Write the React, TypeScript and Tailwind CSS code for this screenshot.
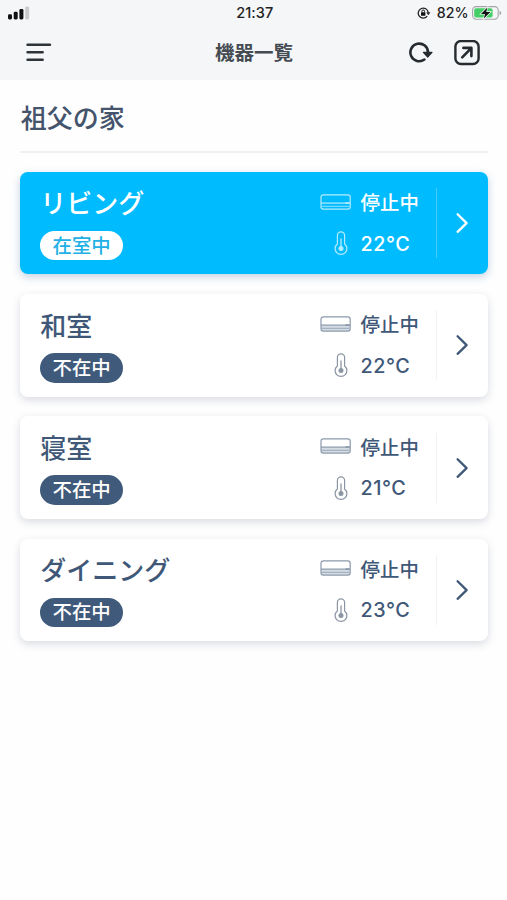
import clsx from 'clsx';

type Room = {
  name: string;
  present: boolean;
  status: string;
  temperature: number;
};

const rooms: Room[] = [
  { name: 'リビング', present: true, status: '停止中', temperature: 22 },
  { name: '和室', present: false, status: '停止中', temperature: 22 },
  { name: '寝室', present: false, status: '停止中', temperature: 21 },
  { name: 'ダイニング', present: false, status: '停止中', temperature: 23 },
];

function SignalIcon() {
  return (
    <svg width="22" height="14" viewBox="0 0 22 14" fill="#111">
      <rect x="0" y="8.2" width="4" height="5.2" rx="1.3" />
      <rect x="5.7" y="5.8" width="4" height="7.6" rx="1.3" />
      <rect x="11.4" y="3" width="4" height="10.4" rx="1.3" />
      <rect x="17.2" y="0.4" width="3.9" height="13" rx="1.3" fill="#c9cbcd" />
    </svg>
  );
}

function RotationLockIcon() {
  return (
    <svg width="14" height="12" viewBox="0 0 14 12" fill="none">
      <path d="M10.2 9.2A5 5 0 1 1 11.2 5.4" stroke="#222" strokeWidth="1.3" />
      <path d="M9.2 5.2h4.2L11.3 8.2z" fill="#222" />
      <rect x="4" y="5.2" width="4.4" height="3.5" rx="0.5" fill="#111" />
      <path d="M4.9 5.4V4.3a1.3 1.3 0 0 1 2.6 0v1.1" stroke="#111" strokeWidth="1" />
    </svg>
  );
}

function BatteryIcon() {
  return (
    <svg width="30" height="14" viewBox="0 0 30 14" fill="none">
      <rect x="0.6" y="0.6" width="25.6" height="12.6" rx="3.6" stroke="#a2a5a7" strokeWidth="1.1" />
      <rect x="2.2" y="2.2" width="18.4" height="9.4" rx="2" fill="#43cf66" />
      <path d="M27.6 4.8v4.4c1.1-.5 1.6-1.2 1.6-2.2s-.5-1.7-1.6-2.2z" fill="#a2a5a7" />
      <path
        className="[paint-order:stroke]"
        d="M15.4 1.4 9 7.9h4l-1.2 4.7 6.6-6.7h-4.2z"
        fill="#111"
        stroke="#f4f6f8"
        strokeWidth="1.4"
      />
    </svg>
  );
}

function MenuIcon() {
  return (
    <svg width="26" height="20" viewBox="0 0 26 20" stroke="#2e3338" strokeWidth="2.6" strokeLinecap="round">
      <path d="M1.6 1.8h22.3M1.6 9.3h15M1.6 16.7h15" />
    </svg>
  );
}

function ReloadIcon() {
  return (
    <svg width="24" height="22" viewBox="0 0 24 22" fill="none">
      <path d="M15.4 17.5A8.8 8.8 0 1 1 19 10.5" stroke="#262b30" strokeWidth="2.6" strokeLinecap="round" />
      <path d="M14.4 10.4h8.6L18.7 15z" fill="#262b30" stroke="#262b30" strokeWidth="1.2" strokeLinejoin="round" />
    </svg>
  );
}

function ExternalIcon() {
  return (
    <svg width="26" height="26" viewBox="0 0 26 26" fill="none" stroke="#262b30" strokeWidth="2.4">
      <rect x="1.4" y="1" width="23.2" height="23" rx="5.6" />
      <path d="M8.2 17.4 16.8 8.6M9.4 7.9h8v8.2" strokeWidth="2.6" strokeLinecap="round" strokeLinejoin="round" />
    </svg>
  );
}

function AirConIcon({ active }: { active: boolean }) {
  return (
    <svg
      className="relative -top-[0.8px]"
      width="31"
      height="16"
      viewBox="0 0 31 16"
      fill="none"
      stroke="currentColor"
      strokeWidth="1.2"
    >
      {!active && <path d="M1 9h29v4q0 2-2 2H3q-2 0-2-2z" fill="#d4dce5" stroke="none" />}
      <rect x="1" y="0.8" width="29.2" height="14.4" rx="2.4" />
      <path d="M1 9.1h29" />
      <path d="M2 12.3h27" strokeWidth="0.8" />
      <path d="M25.5 9.1h4" strokeWidth="1.8" />
    </svg>
  );
}

function ThermometerIcon() {
  return (
    <svg width="14" height="25" viewBox="0 0 14 25" fill="none" stroke="currentColor" strokeWidth="1.2">
      <path d="M3.4 12.9V4.4a3.6 3.6 0 0 1 7.2 0v8.5a5.9 5.9 0 1 1-7.2 0z" />
      <circle cx="7" cy="17.6" r="2.5" fill="currentColor" stroke="none" />
      <path d="M7 16V7.5" strokeWidth="1.3" />
    </svg>
  );
}

function ChevronIcon() {
  return (
    <svg width="14" height="22" viewBox="0 0 14 22" fill="none" stroke="currentColor" strokeWidth="2.3">
      <path d="m2.6 2.2 9 8.9-9 8.7" strokeLinecap="round" strokeLinejoin="round" />
    </svg>
  );
}

function RoomCard({ room }: { room: Room }) {
  const { name, present, status, temperature } = room;

  return (
    <li
      className={clsx(
        'flex h-[102.4px] items-center rounded-lg pl-5',
        present
          ? 'bg-[#00bcff] text-white shadow-[0_3px_9px_rgba(60,110,170,0.3)]'
          : 'bg-white text-[#3f5878] shadow-[0_3px_9px_rgba(70,80,110,0.2)]'
      )}
    >
      <div className="flex flex-1 flex-col items-start">
        <h3 className="h-[38px] text-[26px] leading-[37px] font-medium">{name}</h3>
        <span
          className={clsx(
            'mt-[7.5px] mb-[0.5px] flex h-[29.5px] w-[83px] items-center justify-center rounded-full pt-[1.5px] text-[19.4px] leading-none font-medium',
            present ? 'bg-white text-[#22b0e6]' : 'bg-[#3f5a7a] text-white'
          )}
        >
          {present ? '在室中' : '不在中'}
        </span>
      </div>
      <div className="w-[116px] text-[19.4px] leading-7 font-medium">
        <div className="flex h-[41px] items-center">
          <span className={clsx('flex w-[41px]', present ? 'text-[#b5ebff]' : 'text-[#8b9aab]')}>
            <AirConIcon active={present} />
          </span>
          <span className="pt-px">{status}</span>
        </div>
        <div className="flex h-[41px] items-center">
          <span
            className={clsx('flex w-[41px] justify-center pl-0.5', present ? 'text-[#b5ebff]' : 'text-[#8b95a3]')}
          >
            <ThermometerIcon />
          </span>
          <span className="font-['Inter'] text-[19.8px] tracking-[0.5px]">{temperature}°C</span>
        </div>
      </div>
      <div className={clsx('h-[70px] w-px', present ? 'bg-[#45ccfb]' : 'bg-[#f0f2f5]')} />
      <div className="flex w-[51px] justify-center">
        <ChevronIcon />
      </div>
    </li>
  );
}

export default function App() {
  return (
    <div className="h-[900px] w-[507px] overflow-hidden bg-[#fefefe] font-['Inter','Noto_Sans_CJK_JP',sans-serif]">
      <header className="h-20 bg-[#f4f6f8] text-[#2b3036]">
        <div className="grid h-[26px] grid-cols-3 items-center pr-[5.5px] pl-2 text-[14.5px] leading-none font-medium text-[#222]">
          <SignalIcon />
          <time className="text-center tracking-[0.1px]">21:37</time>
          <div className="flex items-center justify-end">
            <RotationLockIcon />
            <span className="mr-[3px] ml-[6px] text-[14.2px]">82%</span>
            <BatteryIcon />
          </div>
        </div>
        <div className="grid h-[53px] grid-cols-3 items-center pr-[27px] pl-[26px]">
          <MenuIcon />
          <h1 className="pl-0.5 text-center text-[19.5px] leading-7 font-bold text-[#454b52]">機器一覧</h1>
          <div className="flex items-center justify-end gap-[21px]">
            <ReloadIcon />
            <ExternalIcon />
          </div>
        </div>
      </header>
      <main className="pr-[19.4px] pl-[20.2px]">
        <h2 className="h-[73px] border-b-2 border-[#eff1f3] pl-[0.5px] text-[26px] leading-[77px] font-medium text-[#44546c]">
          祖父の家
        </h2>
        <ul className="mt-[19px] flex flex-col gap-[19.8px]">
          {rooms.map((room) => (
            <RoomCard key={room.name} room={room} />
          ))}
        </ul>
      </main>
    </div>
  );
}
